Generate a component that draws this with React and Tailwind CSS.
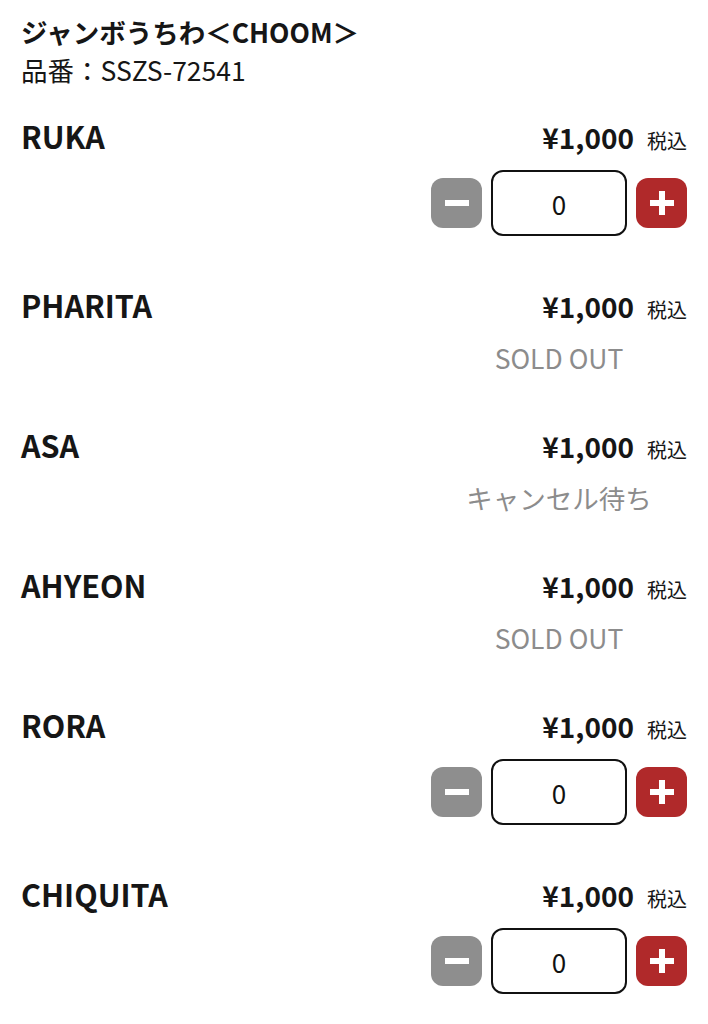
import React, { useState } from "react"

const items = [
  { name: "RUKA", status: "open" },
  { name: "PHARITA", status: "SOLD OUT" },
  { name: "ASA", status: "キャンセル待ち" },
  { name: "AHYEON", status: "SOLD OUT" },
  { name: "RORA", status: "open" },
  { name: "CHIQUITA", status: "open" },
]

function Counter() {
  const [count, setCount] = useState(0)
  return (
    <div className="flex justify-end items-center gap-[9px] mt-[13px] h-[66px]">
      <button
        className="w-[51px] h-[50px] rounded-[12px] bg-[#8e8e8e] flex items-center justify-center"
        onClick={() => setCount(Math.max(0, count - 1))}
      >
        <span className="block w-[24px] h-[6px] bg-white" />
      </button>
      <div className="w-[136px] h-[66px] rounded-[12px] border-2 border-[#111] flex items-center justify-center text-[26px] text-[#111]">
        {count}
      </div>
      <button
        className="w-[51px] h-[50px] rounded-[12px] bg-[#b0292a] flex items-center justify-center relative"
        onClick={() => setCount(count + 1)}
      >
        <span className="block w-[24px] h-[6px] bg-white" />
        <span className="absolute w-[6px] h-[24px] bg-white" />
      </button>
    </div>
  )
}

function Row({ item }) {
  const open = item.status === "open"
  return (
    <div className="pb-[50px]">
      <div className="flex justify-between items-center h-[40px]">
        <span className="text-[30.5px] font-bold text-[#161616]">{item.name}</span>
        <div className="flex items-baseline">
          <span className="text-[28px] font-bold text-[#161616]">¥1,000</span>
          <span className="ml-[13px] text-[20px] text-[#161616]">税込</span>
        </div>
      </div>
      {open ? (
        <Counter />
      ) : (
        <div className="flex justify-end mt-[14px] h-[36px]">
          <div className="w-[256px] text-center text-[26.5px] leading-[36px] text-[#8c8c8c]">
            {item.status}
          </div>
        </div>
      )}
    </div>
  )
}

export default function App() {
  return (
    <div className="min-h-screen bg-white px-[21px] pt-[13px] font-['Noto_Sans_CJK_JP','Noto_Sans',sans-serif] text-[#161616]">
      <div className="mb-[28px]">
        <div className="text-[26.5px] font-bold leading-[38px]">ジャンボうちわ＜CHOOM＞</div>
        <div className="text-[26.5px] leading-[38px]">品番：SSZS-72541</div>
      </div>
      {items.map((item) => (
        <Row key={item.name} item={item} />
      ))}
    </div>
  )
}
